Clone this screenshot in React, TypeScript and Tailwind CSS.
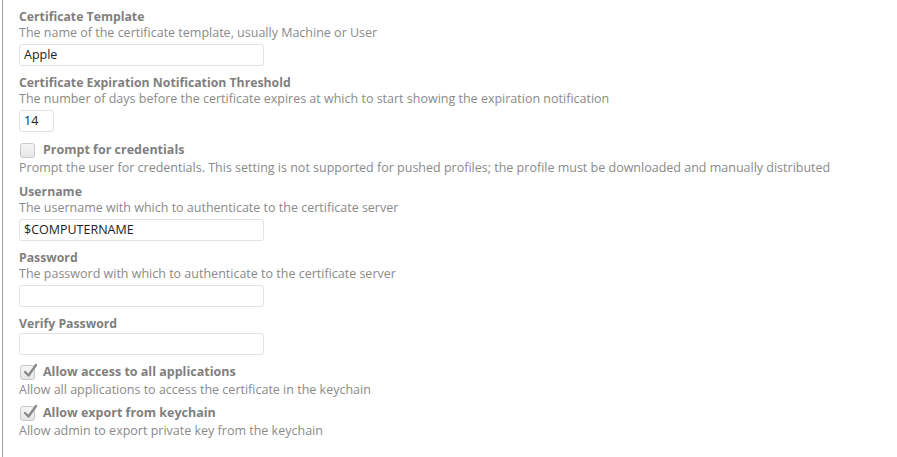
import React from 'react';

const font = { fontFamily: '"Open Sans", "Liberation Sans", sans-serif' };

function Title({ children }: { children: React.ReactNode }) {
  return <div className="text-[12.25px] leading-[16px] font-bold text-[#7f7f7f]">{children}</div>;
}

function Desc({ children }: { children: React.ReactNode }) {
  return <div className="text-[12.5px] leading-[16px] text-[#8a8a8a]">{children}</div>;
}

function TextBox({ value = '', width = 'w-[245px]' }: { value?: string; width?: string }) {
  return (
    <div
      className={`${width} h-[22px] mt-[3px] rounded-[3px] border border-[#e3e3e3] bg-white px-[4px] text-[12.5px] leading-[20px] text-[#222]`}
    >
      {value}
    </div>
  );
}

function Check({ checked }: { checked?: boolean }) {
  return (
    <div className="relative w-[15px] h-[15px] rounded-[3px] border border-[#c8c8c8] bg-gradient-to-b from-[#f6f6f6] to-[#e6e6e6] shrink-0">
      {checked && (
        <svg viewBox="0 0 16 16" className="absolute left-[1px] -top-[3px] w-[16px] h-[16px]">
          <path d="M3 9 L6.5 12.5 L14 2" fill="none" stroke="#8a8a8a" strokeWidth="2.4" strokeLinecap="round" strokeLinejoin="round" />
        </svg>
      )}
    </div>
  );
}

function CheckRow({ label, checked }: { label: string; checked?: boolean }) {
  return (
    <div className="flex items-center gap-[8px] h-[16px] pl-[1px]">
      <Check checked={checked} />
      <span className="text-[12.5px] leading-[16px] font-bold text-[#7f7f7f]">{label}</span>
    </div>
  );
}

export default function App() {
  return (
    <div className="w-[897px] h-[457px] bg-white" style={font}>
      <div className="h-full ml-[2px] border-l border-[#a0a0a0] pl-[16px] pt-[9px]">
        <Title>Certificate Template</Title>
        <Desc>The name of the certificate template, usually Machine or User</Desc>
        <TextBox value="Apple" />

        <div className="mt-[9px]">
          <Title>Certificate Expiration Notification Threshold</Title>
          <Desc>The number of days before the certificate expires at which to start showing the expiration notification</Desc>
          <TextBox value="14" width="w-[35px]" />
        </div>

        <div className="mt-[10px]">
          <CheckRow label="Prompt for credentials" />
          <div className="mt-[2px]">
            <Desc>Prompt the user for credentials. This setting is not supported for pushed profiles; the profile must be downloaded and manually distributed</Desc>
          </div>
        </div>

        <div className="mt-[8px]">
          <Title>Username</Title>
          <Desc>The username with which to authenticate to the certificate server</Desc>
          <TextBox value="$COMPUTERNAME" />
        </div>

        <div className="mt-[9px]">
          <Title>Password</Title>
          <Desc>The password with which to authenticate to the certificate server</Desc>
          <TextBox />
        </div>

        <div className="mt-[9px]">
          <Title>Verify Password</Title>
          <div className="-mt-[2px]">
            <TextBox />
          </div>
        </div>

        <div className="mt-[9px]">
          <CheckRow label="Allow access to all applications" checked />
          <div className="mt-[2px]">
            <Desc>Allow all applications to access the certificate in the keychain</Desc>
          </div>
        </div>

        <div className="mt-[7px]">
          <CheckRow label="Allow export from keychain" checked />
          <div className="mt-[2px]">
            <Desc>Allow admin to export private key from the keychain</Desc>
          </div>
        </div>
      </div>
    </div>
  );
}
